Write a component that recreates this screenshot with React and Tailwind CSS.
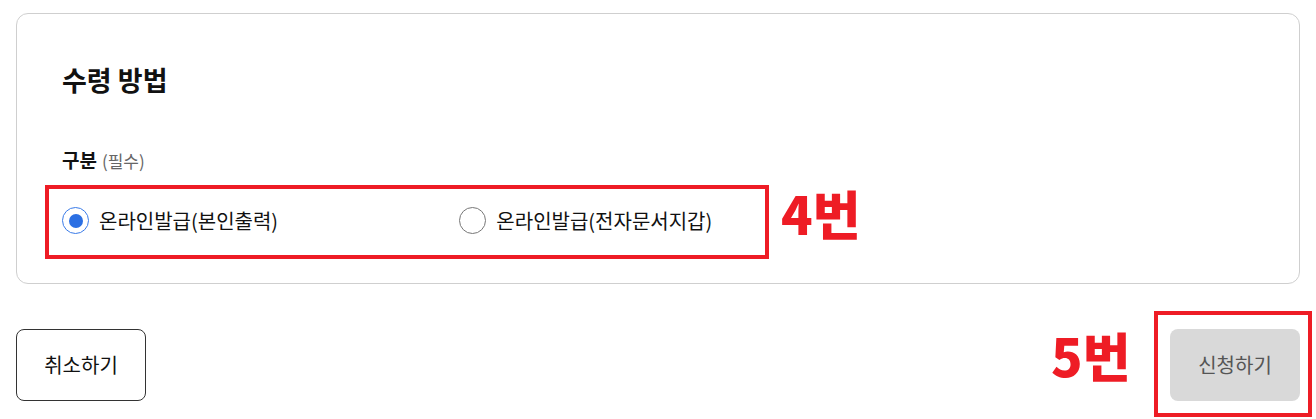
import { useState } from "react";

const options = ["온라인발급(본인출력)", "온라인발급(전자문서지갑)"];

function Radio({ checked }) {
  return checked ? (
    <span className="flex h-[27px] w-[27px] shrink-0 items-center justify-center rounded-full border-[1.5px] border-[#3a7be8]">
      <span className="h-[14px] w-[14px] rounded-full bg-[#2b6fe3]"></span>
    </span>
  ) : (
    <span className="h-[27px] w-[27px] shrink-0 rounded-full border border-[#777]"></span>
  );
}

export default function App() {
  const [selected, setSelected] = useState(0);

  return (
    <div className="relative min-h-[419px] bg-white px-4 pt-[13px] text-[#111] font-['Noto_Sans_CJK_KR','Noto_Sans',sans-serif]">
      {/* CARD */}
      <div className="rounded-xl border border-[#cfcfcf] px-[45px] pt-[47px] pb-[49px]">
        <h2 className="text-[27px] font-bold leading-[38px]">수령 방법</h2>

        <div className="mt-[48px] flex items-baseline gap-[5px] leading-[26px]">
          <span className="text-[19px] font-bold">구분</span>
          <span className="text-[17px] text-[#666]">(필수)</span>
        </div>

        <div className="mt-[33px] grid grid-cols-3">
          {options.map((o, i) => (
            <button
              key={o}
              onClick={() => setSelected(i)}
              className="flex items-center gap-[10px] text-left"
            >
              <Radio checked={selected === i} />
              <span className="text-[20px] leading-[27px]">{o}</span>
            </button>
          ))}
        </div>
      </div>

      {/* BUTTONS */}
      <div className="mt-[45px] flex items-center justify-between">
        <button className="h-[72px] w-[130px] rounded-lg border border-[#333] text-[20px]">
          취소하기
        </button>
        <button className="h-[72px] w-[130px] rounded-lg bg-[#d9d9d9] text-[20px] text-[#555]">
          신청하기
        </button>
      </div>

      {/* ANNOTATIONS */}
      <div className="absolute left-[45px] top-[185px] h-[74px] w-[724px] border-4 border-[#ee1c25]"></div>
      <div className="absolute left-[781px] top-[178px] text-[52px] font-black leading-[70px] text-[#ee1c25]">4번</div>
      <div className="absolute left-[1154px] top-[311px] h-[106px] w-[158px] border-4 border-[#ee1c25]"></div>
      <div className="absolute left-[1051px] top-[320px] text-[52px] font-black leading-[70px] text-[#ee1c25]">5번</div>
    </div>
  );
}
